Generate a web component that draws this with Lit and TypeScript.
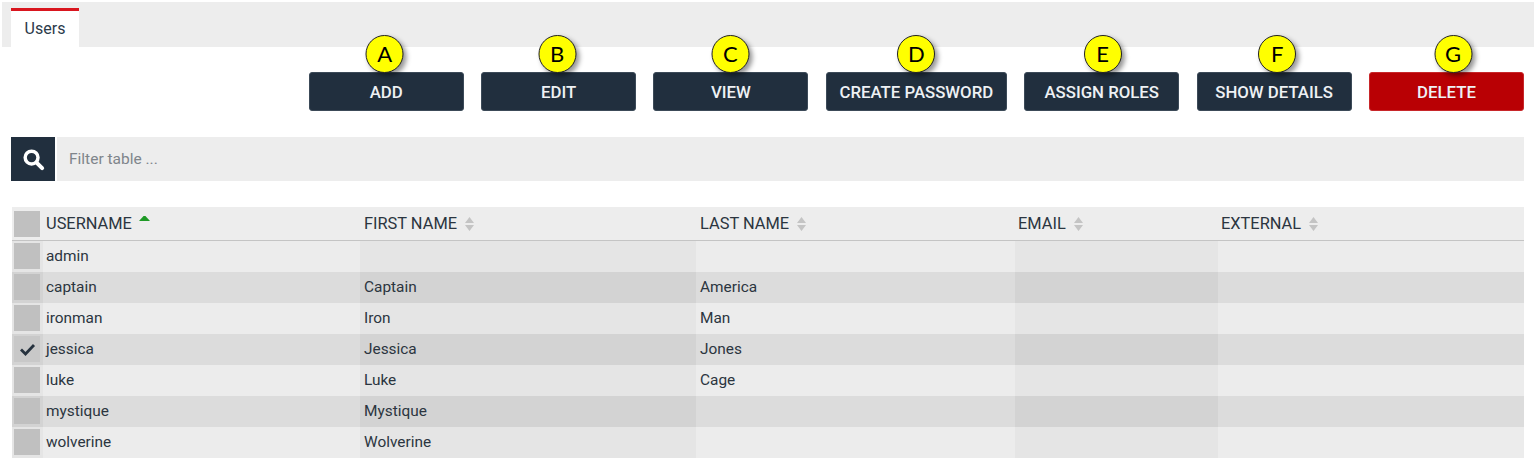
import { LitElement, html, css, svg } from "lit";
import { customElement } from "lit/decorators.js";

const ACTIONS = [
  { label: "ADD", mark: "A", width: 155, shift: -1.5 },
  { label: "EDIT", mark: "B", width: 155, shift: -1.5 },
  { label: "VIEW", mark: "C", width: 155, shift: -0.5 },
  { label: "CREATE PASSWORD", mark: "D", width: 181, shift: 0 },
  { label: "ASSIGN ROLES", mark: "E", width: 155, shift: 1 },
  { label: "SHOW DETAILS", mark: "F", width: 155, shift: 3 },
  { label: "DELETE", mark: "G", width: 155, shift: 6.5, danger: true },
];

const COLUMNS = [
  { label: "USERNAME", width: 317, sorted: true },
  { label: "FIRST NAME", width: 336 },
  { label: "LAST NAME", width: 319 },
  { label: "EMAIL", width: 203 },
  { label: "EXTERNAL", width: 306 },
];

const USERS = [
  ["admin", "", ""],
  ["captain", "Captain", "America"],
  ["ironman", "Iron", "Man"],
  ["jessica", "Jessica", "Jones", true],
  ["luke", "Luke", "Cage"],
  ["mystique", "Mystique", ""],
  ["wolverine", "Wolverine", ""],
] as const;

const searchIcon = svg`<circle cx="10" cy="10" r="6.7" fill="none" stroke="#fff" stroke-width="3.6"/><path d="M15.2 15.2 21 21" fill="none" stroke="#fff" stroke-width="4.2" stroke-linecap="round"/>`;

@customElement("app-root")
export class AppRoot extends LitElement {
  static styles = css`
    :host {
      display: block;
      width: 1537px;
      height: 474px;
      background: #fff;
      font-family: Roboto, "Liberation Sans", sans-serif;
      color: #2b3540;
      padding: 2px 13px 0 0;
      box-sizing: border-box;
      overflow: hidden;
    }
    .tabbar {
      display: flex;
      height: 45px;
      margin: 0 -10px 0 2px;
      padding: 6px 0 0 9px;
      box-sizing: border-box;
      background: #ededed;
    }
    .tab {
      width: 68px;
      border-top: 3px solid #d9161f;
      background: #fff;
      display: flex;
      align-items: center;
      justify-content: center;
      font-size: 16px;
      padding-bottom: 2px;
      box-sizing: border-box;
      color: #2b3a4a;
    }
    .actions {
      display: flex;
      justify-content: flex-end;
      gap: 17.4px;
      margin-top: 25px;
    }
    .btn {
      position: relative;
      height: 39px;
      border: 1px solid #3c4a58;
      border-radius: 3px;
      background: #212f3e;
      color: #eef1f4;
      font: 500 16.8px Roboto, "Liberation Sans", sans-serif;
      padding: 0;
      box-sizing: border-box;
    }
    .btn.danger {
      background: #b90004;
      border-color: #c8272a;
    }
    .mark {
      position: absolute;
      left: 50%;
      top: -38px;
      margin-left: -19px;
      width: 38px;
      height: 38px;
      box-sizing: border-box;
      border: 1px solid #222;
      border-radius: 50%;
      background: #ffff00;
      color: #000;
      font: 400 22px/36px Lato, "Liberation Sans", sans-serif;
      text-align: center;
      box-shadow: 3px 3px 5px rgba(0, 0, 0, 0.42);
      z-index: 1;
    }
    .filter {
      display: flex;
      gap: 2px;
      height: 44px;
      margin: 26px 0 0 11px;
    }
    .search {
      width: 44px;
      background: #212f3e;
      display: flex;
      align-items: center;
      justify-content: center;
    }
    .search svg {
      width: 23px;
      height: 23px;
    }
    .filter-box {
      flex: 1;
      background: #ededed;
      display: flex;
      align-items: center;
      padding-left: 12px;
      font-size: 15.5px;
      color: #7f858b;
    }
    table {
      margin: 26px 0 0 12px;
      width: 1512px;
      table-layout: fixed;
      border-collapse: collapse;
      font-size: 15.4px;
    }
    th {
      height: 33px;
      padding: 0 0 0 3px;
      background: #ededed;
      border-bottom: 1px solid #c4c4c4;
      font-size: 16.4px;
      font-weight: 400;
      text-align: left;
      box-sizing: content-box;
    }
    td {
      height: 31px;
      padding: 0 0 0 3px;
      box-sizing: border-box;
      background: #ececec;
    }
    th:nth-child(3),
    th:nth-child(4),
    td:nth-child(3),
    td:nth-child(4) {
      padding-left: 4px;
    }
    tr:nth-child(even) td {
      background: #dcdcdc;
    }
    td:nth-child(odd) {
      background: #e5e5e5;
    }
    tr:nth-child(even) td:nth-child(odd) {
      background: #d3d3d3;
    }
    .head {
      display: flex;
      align-items: center;
      gap: 7px;
      height: 100%;
    }
    .sort {
      width: 11px;
      height: 16px;
      flex: none;
    }
    th.check-cell,
    td.check-cell {
      padding: 0 0 0 2px;
    }
    .check {
      width: 26px;
      height: 26px;
      background: #c0c0c0;
      display: flex;
      align-items: center;
      justify-content: center;
    }
    .check svg {
      width: 17px;
      height: 13px;
    }
    .on {
      background: #c8c8c8;
    }
  `;

  render() {
    return html`
      <div class="tabbar"><div class="tab">Users</div></div>
      <div class="actions">
        ${ACTIONS.map(
          (a) => html`<button class="btn ${a.danger ? "danger" : ""}" style="width:${a.width}px">
            <span class="mark" style="transform:translateX(${a.shift}px)">${a.mark}</span>${a.label}
          </button>`
        )}
      </div>
      <div class="filter">
        <div class="search">
          <svg viewBox="0 0 24 24">${searchIcon}</svg>
        </div>
        <div class="filter-box">Filter table ...</div>
      </div>
      <table>
        <colgroup>
          <col style="width:31px" />
          ${COLUMNS.map((c) => html`<col style="width:${c.width}px" />`)}
        </colgroup>
        <thead>
          <tr>
            <th class="check-cell"><div class="check"></div></th>
            ${COLUMNS.map(
              (c) => html`<th>
                <div class="head">
                  ${c.label}
                  <svg class="sort" viewBox="0 0 11 16">
                    ${c.sorted
                      ? svg`<path d="M0 6 5.5 0 11 6z" fill="#1f9a26" transform="translate(0 -1)"/>`
                      : svg`<path d="M1 7 5.5 1 10 7zM1 9h9l-4.5 6z" fill="#c4c4c4"/>`}
                  </svg>
                </div>
              </th>`
            )}
          </tr>
        </thead>
        <tbody>
          ${USERS.map(
            (u) => html`<tr>
              <td class="check-cell">
                <div class="check ${u[3] ? "on" : ""}">
                  ${u[3]
                    ? html`<svg viewBox="0 0 16 13"><path d="M1.5 6.5 6 11 14.5 2" fill="none" stroke="#26323e" stroke-width="2.8"/></svg>`
                    : ""}
                </div>
              </td>
              <td>${u[0]}</td>
              <td>${u[1]}</td>
              <td>${u[2]}</td>
              <td></td>
              <td></td>
            </tr>`
          )}
        </tbody>
      </table>
    `;
  }
}
